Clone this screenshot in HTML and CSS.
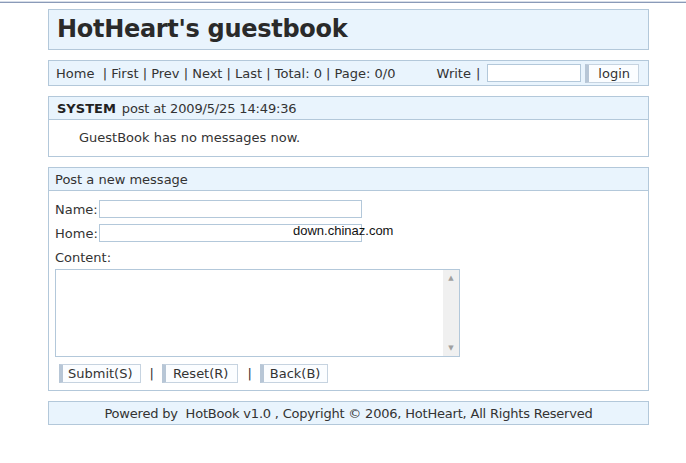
FILE: index.html
```html
<!DOCTYPE html>
<html lang="en">
<head>
    <meta charset="UTF-8">
    <title>HotHeart's guestbook</title>
    <link rel="stylesheet" href="styles.css">
</head>
<body>
    <div class="topline"></div>
    <div class="page">
        <div class="box title-box">
            <h1>HotHeart's guestbook</h1>
        </div>

        <div class="box nav">
            <div class="nav-left">
                <a href="#">Home</a>&nbsp; | First | Prev | Next | Last | Total: 0 | Page: 0/0
            </div>
            <div class="nav-right">
                <span class="write">Write</span>
                <span>|</span>
                <input type="password" class="login-input">
                <button class="btn login-btn">login</button>
            </div>
        </div>

        <div class="box">
            <div class="box-head"><strong>SYSTEM</strong> post at 2009/5/25 14:49:36</div>
            <div class="msg-body">GuestBook has no messages now.</div>
        </div>

        <div class="box">
            <div class="box-head post-head">Post a new message</div>
            <form class="post-form">
                <div class="field">
                    <label>Name:</label>
                    <input type="text" class="text-input">
                </div>
                <div class="field">
                    <label>Home:</label>
                    <input type="text" class="text-input">
                </div>
                <div class="content-label">Content:</div>
                <div class="area-wrap">
                    <textarea class="content-area"></textarea>
                    <div class="fake-scroll">
                        <span class="arrow">&#9650;</span>
                        <span class="arrow">&#9660;</span>
                    </div>
                </div>
                <div class="actions">
                    <button type="button" class="btn submit-btn">Submit(S)</button>
                    <span class="sep">|</span>
                    <button type="button" class="btn">Reset(R)</button>
                    <span class="sep">|</span>
                    <button type="button" class="btn back-btn">Back(B)</button>
                </div>
            </form>
        </div>

        <div class="box footer">
            Powered by&nbsp; HotBook v1.0 , Copyright &copy; 2006, HotHeart, All Rights Reserved
        </div>

        <div class="watermark">down.chinaz.com</div>
    </div>
</body>
</html>
```

FILE: styles.css
```css
* { margin: 0; padding: 0; box-sizing: border-box; }
body {
    font-family: 'DejaVu Sans', Verdana, sans-serif;
    font-size: 13px;
    color: #333;
    background: #fff;
}
.topline {
    height: 3px;
    border-top: 1px solid #fff;
    border-bottom: 1px solid #8a9ab8;
    background: #d6dde8;
}
.page {
    width: 601px;
    margin-left: 48px;
    padding-top: 6px;
    position: relative;
}
.box {
    border: 1px solid #b3c8da;
    background: #fff;
    margin-bottom: 10px;
}
.title-box {
    background: #e9f4fd;
    height: 41px;
    padding: 5px 8px 0;
}
h1 {
    font-size: 24px;
    font-weight: bold;
    color: #2a2a2a;
    letter-spacing: -0.3px;
}
.nav {
    background: #e9f4fd;
    height: 26px;
    display: flex;
    align-items: center;
    justify-content: space-between;
    padding: 0 9px 0 7px;
}
.nav a { color: #333; text-decoration: none; }
.nav-right {
    display: flex;
    align-items: center;
}
.write { margin-right: 5px; }
.login-input {
    width: 94px;
    height: 18px;
    border: 1px solid #b3c8da;
    margin: 0 4px 0 7px;
}
.box-head {
    background: #e9f4fd;
    height: 23px;
    border-bottom: 1px solid #b3c8da;
    padding: 4px 8px 0;
    letter-spacing: -0.15px;
}
.box-head strong { color: #222; letter-spacing: 0; margin-right: 2px; }
.post-head { padding-left: 6px; letter-spacing: 0; }
.msg-body {
    background: #fff;
    height: 36px;
    padding: 10px 0 0 30px;
}
.post-form {
    padding: 9px 6px 7px;
}
.field {
    display: flex;
    align-items: center;
    margin-bottom: 6px;
}
.field label { width: 44px; }
.text-input {
    width: 263px;
    height: 18px;
    border: 1px solid #b3c8da;
}
.content-label {
    margin: 8px 0 4px;
}
.area-wrap {
    display: flex;
    width: 405px;
    height: 88px;
    border: 1px solid #b3c8da;
}
.content-area {
    flex: 1;
    border: none;
    resize: none;
    outline: none;
}
.fake-scroll {
    width: 16px;
    background: #f0f0f0;
    display: flex;
    flex-direction: column;
    justify-content: space-between;
    align-items: center;
    padding: 4px 0;
}
.arrow {
    font-size: 7px;
    color: #a0a0a0;
    line-height: 8px;
}
.actions {
    display: flex;
    align-items: center;
    margin-top: 7px;
    padding-left: 4px;
}
.sep { margin: 0 8px 0 9px; }
.btn {
    font-family: 'DejaVu Sans', Verdana, sans-serif;
    font-size: 13px;
    color: #333;
    height: 19px;
    padding: 0 9px 0 7px;
    background: #fbfdff;
    border: 1px solid #c6d3e0;
    border-left: 4px solid #b7c6d6;
}
.submit-btn { padding: 0 7px 0 5px; }
.back-btn { padding: 0 7px 0 6px; }
.login-btn {
    height: 19px;
    padding: 0 8px 0 9px;
}
.footer {
    background: #e9f4fd;
    height: 24px;
    text-align: center;
    padding-top: 4px;
    letter-spacing: -0.2px;
}
.watermark {
    position: absolute;
    left: 245px;
    top: 220px;
    font-family: 'Liberation Sans', Arial, sans-serif;
    font-size: 13px;
    color: #111;
}
```
